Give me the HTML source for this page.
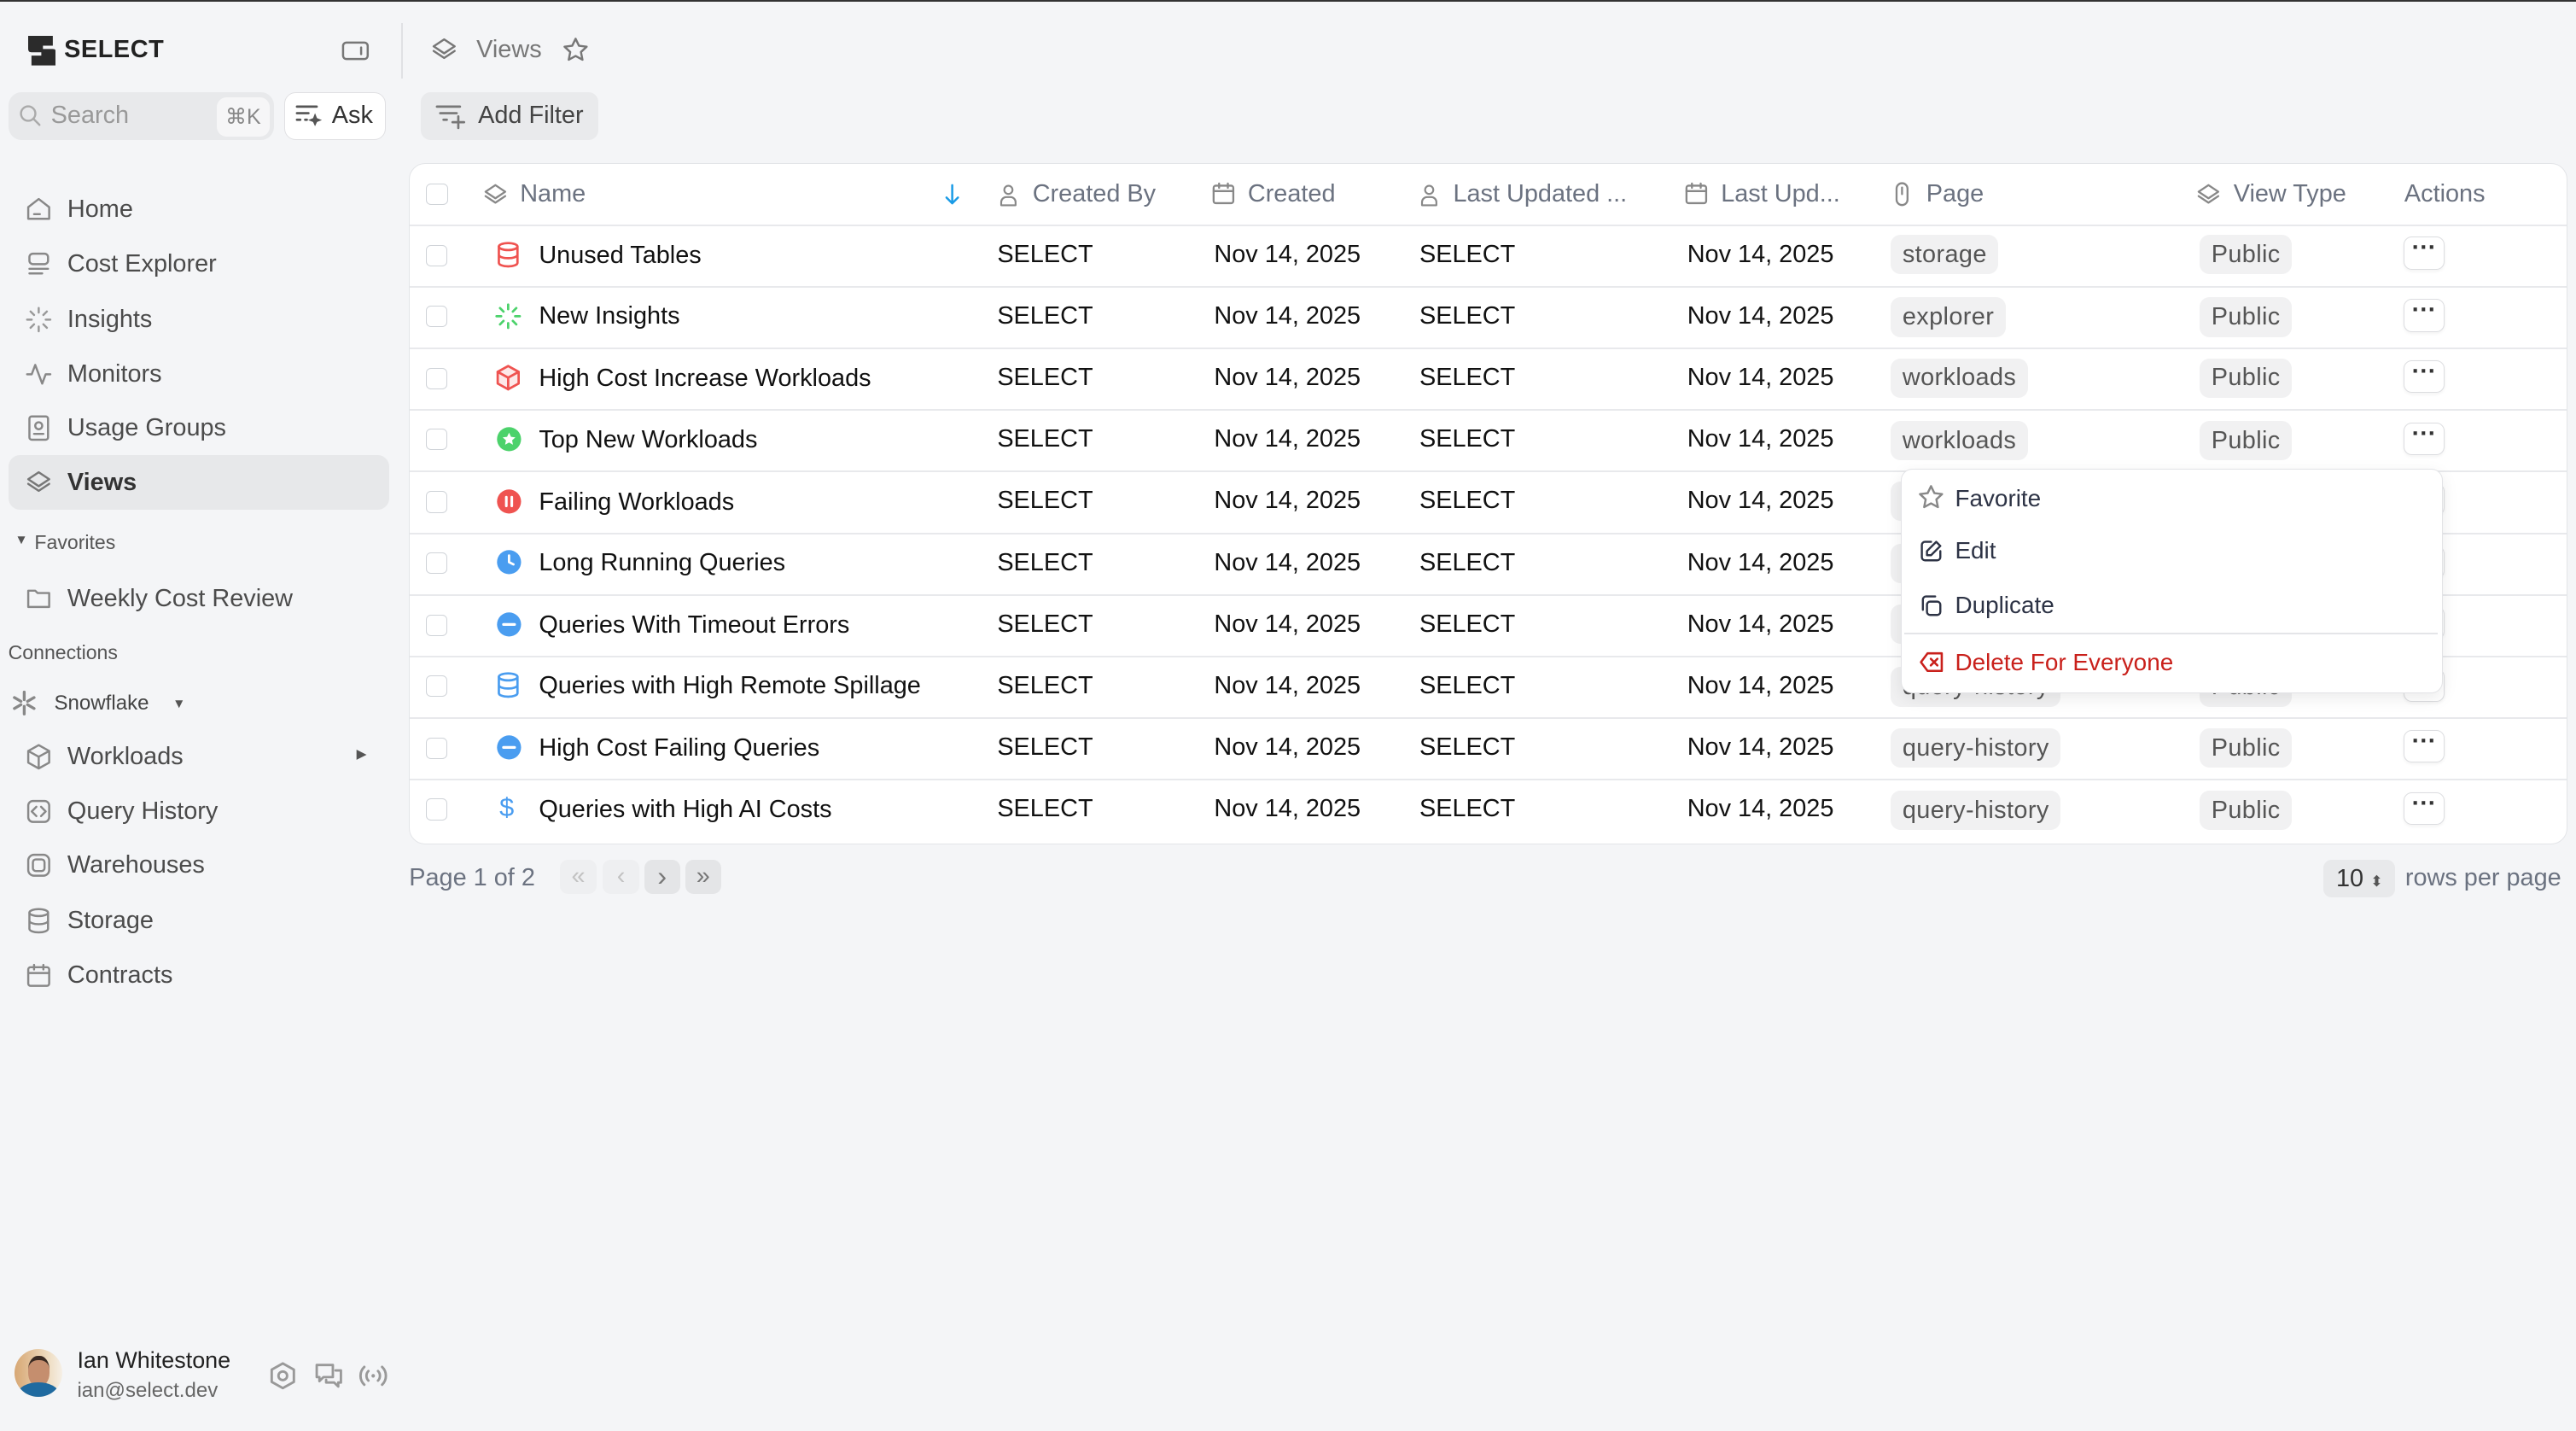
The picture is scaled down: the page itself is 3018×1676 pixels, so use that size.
<!DOCTYPE html>
<html><head><meta charset="utf-8"><style>
html,body{margin:0;padding:0}
body{width:1568px;height:870px;zoom:1.92475;background:#f4f5f7;font-family:"Liberation Sans",sans-serif;position:relative;top:1px;overflow:hidden;color:#111}
.a{position:absolute}
.topline{left:0;top:-1px;width:1568px;height:1px;background:#333}
.nav{left:41px;font-size:15px;color:#4b4b4b}
.ni{left:15px;width:17px;height:17px}
svg{fill:none;stroke-linecap:round;stroke-linejoin:round}
.tbl{left:249px;top:98px;width:1313px;height:414px;background:#fff;border:1px solid #e3e5e8;border-radius:10px}
.row{left:0;width:1313px;height:37px;border-top:1.5px solid #e8e9ec}
.cb{width:12px;height:12px;border:1px solid #cfd3d8;border-radius:3px;background:#fff}
.t{font-size:15px;color:#111;white-space:nowrap}
.h{font-size:15px;color:#6b7280;white-space:nowrap}
.chip{background:#f1f1f2;border-radius:6px;font-size:15px;color:#555;padding:2px 7px;height:20px;line-height:20px;letter-spacing:.2px}
.dots{width:24px;height:19px;border:1px solid #dcdde0;border-radius:5px;background:#fff;font-size:15px;text-align:center;line-height:13px;color:#333;font-weight:bold;box-shadow:0 1px 2px rgba(0,0,0,.05)}
.btn{background:#e9eaec;border-radius:6px}
</style></head><body>
<div class="a topline"></div>
<svg class="a" style="left:17px;top:21px" width="17" height="18" viewBox="0 0 17 18"><path d="M2 0h13v6H9v2h6q2 0 2 2v8H2v-6h6v-2H2q-2 0-2-2V0z" fill="#2b2b2b" stroke="none"/></svg>
<div class="a" style="left:39px;top:21px;font-size:15px;font-weight:bold;color:#222;letter-spacing:.3px">SELECT</div>
<svg class="a" style="left:208px;top:23px" width="17" height="14" viewBox="0 0 17 14"><rect x="1" y="2" width="15" height="10" rx="2" stroke="#777" stroke-width="1.3"/><path d="M12 5v4" stroke="#777" stroke-width="1.3"/></svg>
<div class="a" style="left:244px;top:13px;width:1px;height:34px;background:#e0e1e4"></div>
<svg class="a" style="left:262px;top:21px" width="17" height="17" viewBox="0 0 24 24"><path d="M12 3l9 6-9 6-9-6z M3 13l9 6 9-6" stroke="#777" stroke-width="1.8"/></svg>
<div class="a" style="left:290px;top:21px;font-size:15px;color:#777">Views</div>
<svg class="a" style="left:342px;top:21px" width="17" height="17" viewBox="0 0 24 24"><path d="M12 2.5l2.9 6 6.6.8-4.9 4.6 1.3 6.6L12 17.3l-5.9 3.2 1.3-6.6L2.5 9.3l6.6-.8z" stroke="#777" stroke-width="1.8"/></svg>
<div class="a" style="left:5px;top:55px;width:162px;height:29px;background:#e8e9eb;border-radius:8px"></div>
<svg class="a" style="left:11px;top:62px" width="15" height="15" viewBox="0 0 24 24"><circle cx="10" cy="10" r="7" stroke="#aaa" stroke-width="2"/><path d="M15 15l6 6" stroke="#aaa" stroke-width="2"/></svg>
<div class="a" style="left:31px;top:61px;font-size:15px;color:#999">Search</div>
<div class="a" style="left:132px;top:58px;width:32px;height:24px;background:#f6f6f7;border-radius:6px;font-size:13px;color:#888;text-align:center;line-height:24px">⌘K</div>
<div class="a" style="left:173px;top:55px;width:61px;height:28px;background:#fff;border:1px solid #e0e0e3;border-radius:7px"></div>
<svg class="a" style="left:180px;top:62px" width="18" height="15" viewBox="0 0 18 15"><path d="M1 2h12M1 6h7M1 10h2M6 10h1" stroke="#555" stroke-width="1.4"/><path d="M12 6l1.2 3 3 1.2-3 1.2L12 14l-1.2-2.6-3-1.2 3-1.2z" fill="#555" stroke="none"/></svg>
<div class="a" style="left:202px;top:61px;font-size:15px;color:#333">Ask</div>
<div class="a btn" style="left:256px;top:55px;width:108px;height:29px"></div>
<svg class="a" style="left:265px;top:62px" width="20" height="16" viewBox="0 0 20 16"><path d="M1 2h14M3 6h10M5 10h2M14 8v7M10.5 11.5h7" stroke="#777" stroke-width="1.4"/></svg>
<div class="a" style="left:291px;top:61px;font-size:15px;color:#444">Add Filter</div>
<div class="a" style="left:5px;top:276px;width:232px;height:33px;background:#e7e8ea;border-radius:7px"></div>
<svg class="a ni" style="top:118px" viewBox="0 0 24 24"><path d="M3 10l9-7 9 7v10H3z M8 16h5" stroke="#888" stroke-width="1.8"/></svg>
<div class="a nav" style="top:118px">Home</div>
<svg class="a ni" style="top:151px" viewBox="0 0 24 24"><rect x="4" y="3" width="16" height="9" rx="3" stroke="#888" stroke-width="1.8"/><path d="M4 16h16M4 20h11" stroke="#888" stroke-width="1.8"/></svg>
<div class="a nav" style="top:151px">Cost Explorer</div>
<svg class="a ni" style="top:185px" viewBox="0 0 24 24"><path d="M12 2v4M12 18v4M2 12h4M18 12h4M5 5l3 3M16 16l3 3M5 19l3-3M16 8l3-3" stroke="#999" stroke-width="1.8"/></svg>
<div class="a nav" style="top:185px">Insights</div>
<svg class="a ni" style="top:218px" viewBox="0 0 24 24"><path d="M2 12h4l3-8 6 16 3-8h4" stroke="#888" stroke-width="1.8"/></svg>
<div class="a nav" style="top:218px">Monitors</div>
<svg class="a ni" style="top:251px" viewBox="0 0 24 24"><rect x="4" y="2" width="16" height="20" rx="2" stroke="#888" stroke-width="1.8"/><circle cx="12" cy="10" r="3" stroke="#888" stroke-width="1.8"/><path d="M8 17h8" stroke="#888" stroke-width="1.8"/></svg>
<div class="a nav" style="top:251px">Usage Groups</div>
<svg class="a ni" style="top:284px" viewBox="0 0 24 24"><path d="M12 3l9 6-9 6-9-6z M3 13l9 6 9-6" stroke="#777" stroke-width="1.8"/></svg>
<div class="a nav" style="top:284px;font-weight:bold;color:#333">Views</div>
<div class="a" style="left:9px;top:323px;font-size:8px;color:#555">▼</div>
<div class="a" style="left:21px;top:322px;font-size:12px;color:#555">Favorites</div>
<svg class="a ni" style="top:355px" viewBox="0 0 24 24"><path d="M3 5h6l2 2h10v12H3z" stroke="#888" stroke-width="1.8"/></svg>
<div class="a nav" style="top:355px">Weekly Cost Review</div>
<div class="a" style="left:5px;top:389px;font-size:12px;color:#555">Connections</div>
<svg class="a" style="left:7px;top:419px" width="16" height="16" viewBox="0 0 24 24"><path d="M12 2v7M12 15v7M3 7l6 3.5M15 13.5l6 3.5M3 17l6-3.5M15 10.5l6-3.5" stroke="#888" stroke-width="2.6"/></svg>
<div class="a" style="left:33px;top:420px;font-size:12.5px;color:#444">Snowflake</div>
<div class="a" style="left:105px;top:423px;font-size:8px;color:#555">▼</div>
<svg class="a ni" style="top:451px" viewBox="0 0 24 24"><path d="M12 2l9 5v10l-9 5-9-5V7z M3 7l9 5 9-5M12 12v10" stroke="#888" stroke-width="1.8"/></svg>
<div class="a nav" style="top:451px">Workloads</div>
<div class="a" style="left:217px;top:453px;font-size:8px;color:#555">▶</div>
<svg class="a ni" style="top:484px" viewBox="0 0 24 24"><rect x="3" y="3" width="18" height="18" rx="4" stroke="#888" stroke-width="1.8"/><path d="M10 8l-4 4 4 4M14 8l4 4-4 4" stroke="#888" stroke-width="1.8"/></svg>
<div class="a nav" style="top:484px">Query History</div>
<svg class="a ni" style="top:517px" viewBox="0 0 24 24"><rect x="3" y="3" width="18" height="18" rx="5" stroke="#888" stroke-width="1.8"/><rect x="7" y="7" width="10" height="10" rx="2.5" stroke="#888" stroke-width="1.8"/></svg>
<div class="a nav" style="top:517px">Warehouses</div>
<svg class="a ni" style="top:551px" viewBox="0 0 24 24"><ellipse cx="12" cy="5" rx="8" ry="3" stroke="#888" stroke-width="1.8"/><path d="M4 5v14c0 1.7 3.6 3 8 3s8-1.3 8-3V5M4 12c0 1.7 3.6 3 8 3s8-1.3 8-3" stroke="#888" stroke-width="1.8"/></svg>
<div class="a nav" style="top:551px">Storage</div>
<svg class="a ni" style="top:584px" viewBox="0 0 24 24"><rect x="3" y="5" width="18" height="16" rx="2" stroke="#888" stroke-width="1.8"/><path d="M8 3v4M16 3v4M3 10h18" stroke="#888" stroke-width="1.8"/></svg>
<div class="a nav" style="top:584px">Contracts</div>
<div class="a" style="left:9px;top:820px;width:29px;height:29px;border-radius:50%;overflow:hidden;background:linear-gradient(90deg,#d7a774,#eedcc0 70%,#f5efe6)"><div style="position:absolute;left:8px;top:4px;width:13px;height:16px;border-radius:45%;background:#c58e6e;border-top:3px solid #3a2a22"></div><div style="position:absolute;left:2px;top:20px;width:25px;height:14px;border-radius:50% 50% 0 0;background:#1f6aa0"></div></div>
<div class="a" style="left:47px;top:819px;font-size:14px;color:#222">Ian Whitestone</div>
<div class="a" style="left:47px;top:838px;font-size:12.5px;color:#666">ian@select.dev</div>
<svg class="a" style="left:163px;top:827px" width="18" height="18" viewBox="0 0 24 24"><path d="M12 2l9 5v10l-9 5-9-5V7z" stroke="#999" stroke-width="2"/><circle cx="12" cy="12" r="3.5" stroke="#999" stroke-width="2"/></svg>
<svg class="a" style="left:190px;top:827px" width="20" height="18" viewBox="0 0 24 22"><path d="M3 3h12v9H8l-3 3v-3H3z M17 7h4v9h-2v3l-3-3h-6v-2" stroke="#999" stroke-width="1.8"/></svg>
<svg class="a" style="left:217px;top:828px" width="20" height="16" viewBox="0 0 24 18"><circle cx="12" cy="9" r="1.3" fill="#999" stroke="none"/><path d="M8.5 5.5a5 5 0 000 7M15.5 5.5a5 5 0 010 7M5.5 2.5a9 9 0 000 13M18.5 2.5a9 9 0 010 13" stroke="#999" stroke-width="1.8"/></svg>

<div class="a tbl">
 <div class="a cb" style="left:10px;top:12px"></div>
 <svg class="a" style="left:44px;top:11px" width="16" height="16" viewBox="0 0 24 24"><path d="M12 3l9 6-9 6-9-6z M3 13l9 6 9-6" stroke="#888" stroke-width="1.8"/></svg>
 <div class="a h" style="left:67px;top:10px">Name</div>
 <svg class="a" style="left:325px;top:12px" width="10" height="13" viewBox="0 0 10 13"><path d="M5 1v11M1.5 8.5L5 12l3.5-3.5" stroke="#1a9be6" stroke-width="1.3"/></svg>
 <svg class="a" style="left:357px;top:11px" width="15" height="16" viewBox="0 0 24 24"><circle cx="12" cy="7" r="4" stroke="#888" stroke-width="1.8"/><path d="M5 22v-3a5 5 0 015-5h4a5 5 0 015 5v3z" stroke="#888" stroke-width="1.8"/></svg>
 <div class="a h" style="left:379px;top:10px">Created By</div>
 <svg class="a" style="left:487px;top:10px" width="16" height="16" viewBox="0 0 24 24"><rect x="3" y="5" width="18" height="16" rx="2" stroke="#888" stroke-width="1.8"/><path d="M8 3v4M16 3v4M3 10h18" stroke="#888" stroke-width="1.8"/></svg>
 <div class="a h" style="left:510px;top:10px">Created</div>
 <svg class="a" style="left:613px;top:11px" width="15" height="16" viewBox="0 0 24 24"><circle cx="12" cy="7" r="4" stroke="#888" stroke-width="1.8"/><path d="M5 22v-3a5 5 0 015-5h4a5 5 0 015 5v3z" stroke="#888" stroke-width="1.8"/></svg>
 <div class="a h" style="left:635px;top:10px">Last Updated ...</div>
 <svg class="a" style="left:775px;top:10px" width="16" height="16" viewBox="0 0 24 24"><rect x="3" y="5" width="18" height="16" rx="2" stroke="#888" stroke-width="1.8"/><path d="M8 3v4M16 3v4M3 10h18" stroke="#888" stroke-width="1.8"/></svg>
 <div class="a h" style="left:798px;top:10px">Last Upd...</div>
 <svg class="a" style="left:900px;top:10px" width="16" height="17" viewBox="0 0 24 24"><rect x="7" y="2" width="10" height="20" rx="5" stroke="#888" stroke-width="1.8"/><path d="M12 6v6" stroke="#888" stroke-width="1.8"/></svg>
 <div class="a h" style="left:923px;top:10px">Page</div>
 <svg class="a" style="left:1087px;top:11px" width="16" height="16" viewBox="0 0 24 24"><path d="M12 3l9 6-9 6-9-6z M3 13l9 6 9-6" stroke="#888" stroke-width="1.8"/></svg>
 <div class="a h" style="left:1110px;top:10px">View Type</div>
 <div class="a h" style="left:1214px;top:10px">Actions</div>
 <div class="a row" style="top:37px"></div><div class="a row" style="top:74.5px"></div><div class="a row" style="top:112px"></div><div class="a row" style="top:149.5px"></div><div class="a row" style="top:187px"></div><div class="a row" style="top:224.5px"></div><div class="a row" style="top:262px"></div><div class="a row" style="top:299.5px"></div><div class="a row" style="top:337px"></div><div class="a row" style="top:374.5px"></div>
</div>

<div class="a cb" style="left:259px;top:148px"></div><div class="a cb" style="left:259px;top:185px"></div><div class="a cb" style="left:259px;top:223px"></div><div class="a cb" style="left:259px;top:260px"></div><div class="a cb" style="left:259px;top:298px"></div><div class="a cb" style="left:259px;top:335px"></div><div class="a cb" style="left:259px;top:373px"></div><div class="a cb" style="left:259px;top:410px"></div><div class="a cb" style="left:259px;top:448px"></div><div class="a cb" style="left:259px;top:485px"></div>
<svg class="a" style="left:301px;top:145px" width="17" height="18" viewBox="0 0 24 24"><ellipse cx="12" cy="5" rx="8" ry="3" stroke="#ef5350" stroke-width="2"/><path d="M4 5v14c0 1.7 3.6 3 8 3s8-1.3 8-3V5M4 12c0 1.7 3.6 3 8 3s8-1.3 8-3" stroke="#ef5350" stroke-width="2"/></svg>
<svg class="a" style="left:301px;top:183px" width="17" height="17" viewBox="0 0 24 24"><path d="M12 2v4M12 18v4M2 12h4M18 12h4M5 5l3 3M16 16l3 3M5 19l3-3M16 8l3-3" stroke="#4cd26b" stroke-width="2"/></svg>
<svg class="a" style="left:301px;top:220px" width="17" height="18" viewBox="0 0 24 24"><path d="M12 2l9 5v10l-9 5-9-5V7z" stroke="#ef5350" stroke-width="2" fill="#fde8e8"/><path d="M3 7l9 5 9-5M12 12v10" stroke="#ef5350" stroke-width="2"/></svg>
<svg class="a" style="left:302px;top:258px" width="16" height="16" viewBox="0 0 24 24"><circle cx="12" cy="12" r="11" fill="#4cd26b" stroke="none"/><path d="M12 6l1.8 3.8 4 .5-3 2.8.8 4L12 15l-3.6 2.1.8-4-3-2.8 4-.5z" fill="#fff" stroke="none"/></svg>
<svg class="a" style="left:302px;top:296px" width="16" height="16" viewBox="0 0 24 24"><circle cx="12" cy="12" r="11" fill="#ef5350" stroke="none"/><path d="M9.5 8v8M14.5 8v8" stroke="#fff" stroke-width="2.4"/></svg>
<svg class="a" style="left:302px;top:333px" width="16" height="16" viewBox="0 0 24 24"><circle cx="12" cy="12" r="11" fill="#4a9df0" stroke="none"/><path d="M12 6v6l4 2" stroke="#fff" stroke-width="2.2"/></svg>
<svg class="a" style="left:302px;top:371px" width="16" height="16" viewBox="0 0 24 24"><circle cx="12" cy="12" r="11" fill="#4a9df0" stroke="none"/><path d="M7 12h10" stroke="#fff" stroke-width="2.6"/></svg>
<svg class="a" style="left:301px;top:407px" width="17" height="18" viewBox="0 0 24 24"><ellipse cx="12" cy="5" rx="8" ry="3" stroke="#4a9df0" stroke-width="2"/><path d="M4 5v14c0 1.7 3.6 3 8 3s8-1.3 8-3V5M4 12c0 1.7 3.6 3 8 3s8-1.3 8-3" stroke="#4a9df0" stroke-width="2"/></svg>
<svg class="a" style="left:302px;top:446px" width="16" height="16" viewBox="0 0 24 24"><circle cx="12" cy="12" r="11" fill="#4a9df0" stroke="none"/><path d="M7 12h10" stroke="#fff" stroke-width="2.6"/></svg>
<div class="a" style="left:304px;top:481px;font-size:16px;color:#4a9df0">$</div>
<div class="a t" style="left:328px;top:146px">Unused Tables</div>
<div class="a t" style="left:328px;top:183px">New Insights</div>
<div class="a t" style="left:328px;top:221px">High Cost Increase Workloads</div>
<div class="a t" style="left:328px;top:258px">Top New Workloads</div>
<div class="a t" style="left:328px;top:296px">Failing Workloads</div>
<div class="a t" style="left:328px;top:333px">Long Running Queries</div>
<div class="a t" style="left:328px;top:371px">Queries With Timeout Errors</div>
<div class="a t" style="left:328px;top:408px">Queries with High Remote Spillage</div>
<div class="a t" style="left:328px;top:446px">High Cost Failing Queries</div>
<div class="a t" style="left:328px;top:483px">Queries with High AI Costs</div>
<div class="a" style="left:607px;top:146px;line-height:37.5px;margin-top:-11px">
<div class="t">SELECT</div><div class="t">SELECT</div><div class="t">SELECT</div><div class="t">SELECT</div><div class="t">SELECT</div><div class="t">SELECT</div><div class="t">SELECT</div><div class="t">SELECT</div><div class="t">SELECT</div><div class="t">SELECT</div></div>
<div class="a" style="left:739px;top:146px;line-height:37.5px;margin-top:-11px">
<div class="t">Nov 14, 2025</div><div class="t">Nov 14, 2025</div><div class="t">Nov 14, 2025</div><div class="t">Nov 14, 2025</div><div class="t">Nov 14, 2025</div><div class="t">Nov 14, 2025</div><div class="t">Nov 14, 2025</div><div class="t">Nov 14, 2025</div><div class="t">Nov 14, 2025</div><div class="t">Nov 14, 2025</div></div>
<div class="a" style="left:864px;top:146px;line-height:37.5px;margin-top:-11px">
<div class="t">SELECT</div><div class="t">SELECT</div><div class="t">SELECT</div><div class="t">SELECT</div><div class="t">SELECT</div><div class="t">SELECT</div><div class="t">SELECT</div><div class="t">SELECT</div><div class="t">SELECT</div><div class="t">SELECT</div></div>
<div class="a" style="left:1027px;top:146px;line-height:37.5px;margin-top:-11px">
<div class="t">Nov 14, 2025</div><div class="t">Nov 14, 2025</div><div class="t">Nov 14, 2025</div><div class="t">Nov 14, 2025</div><div class="t">Nov 14, 2025</div><div class="t">Nov 14, 2025</div><div class="t">Nov 14, 2025</div><div class="t">Nov 14, 2025</div><div class="t">Nov 14, 2025</div><div class="t">Nov 14, 2025</div></div>
<div class="a chip" style="left:1151px;top:142px">storage</div>
<div class="a chip" style="left:1151px;top:180px">explorer</div>
<div class="a chip" style="left:1151px;top:217px">workloads</div>
<div class="a chip" style="left:1151px;top:255px">workloads</div>
<div class="a chip" style="left:1151px;top:292px">workloads</div>
<div class="a chip" style="left:1151px;top:330px">query-history</div>
<div class="a chip" style="left:1151px;top:367px">query-history</div>
<div class="a chip" style="left:1151px;top:405px">query-history</div>
<div class="a chip" style="left:1151px;top:442px">query-history</div>
<div class="a chip" style="left:1151px;top:480px">query-history</div>
<div class="a chip" style="left:1339px;top:142px">Public</div><div class="a chip" style="left:1339px;top:180px">Public</div><div class="a chip" style="left:1339px;top:217px">Public</div><div class="a chip" style="left:1339px;top:255px">Public</div><div class="a chip" style="left:1339px;top:292px">Public</div><div class="a chip" style="left:1339px;top:330px">Public</div><div class="a chip" style="left:1339px;top:367px">Public</div><div class="a chip" style="left:1339px;top:405px">Public</div><div class="a chip" style="left:1339px;top:442px">Public</div><div class="a chip" style="left:1339px;top:480px">Public</div>
<div class="a dots" style="left:1463px;top:143px">···</div><div class="a dots" style="left:1463px;top:181px">···</div><div class="a dots" style="left:1463px;top:218px">···</div><div class="a dots" style="left:1463px;top:256px">···</div><div class="a dots" style="left:1463px;top:293px">···</div><div class="a dots" style="left:1463px;top:331px">···</div><div class="a dots" style="left:1463px;top:368px">···</div><div class="a dots" style="left:1463px;top:406px">···</div><div class="a dots" style="left:1463px;top:443px">···</div><div class="a dots" style="left:1463px;top:481px">···</div>

<div class="a" style="left:1157px;top:284px;width:329px;height:136px;background:#fff;border:1px solid #e2e3e6;border-radius:7px;box-shadow:0 3px 10px rgba(0,0,0,.08)"></div>
<svg class="a" style="left:1167px;top:293px" width="17" height="17" viewBox="0 0 24 24"><path d="M12 2.5l2.9 6 6.6.8-4.9 4.6 1.3 6.6L12 17.3l-5.9 3.2 1.3-6.6L2.5 9.3l6.6-.8z" stroke="#888" stroke-width="1.8"/></svg>
<div class="a" style="left:1190px;top:294px;font-size:14.5px;color:#2d3345">Favorite</div>
<svg class="a" style="left:1168px;top:327px" width="15" height="15" viewBox="0 0 24 24"><path d="M12 3H6a3 3 0 00-3 3v12a3 3 0 003 3h12a3 3 0 003-3v-6M17 3l4 4-9 9H8v-4z" stroke="#2d3345" stroke-width="2"/></svg>
<div class="a" style="left:1190px;top:326px;font-size:14.5px;color:#2d3345">Edit</div>
<svg class="a" style="left:1168px;top:360px" width="15" height="15" viewBox="0 0 24 24"><rect x="8" y="8" width="13" height="13" rx="3" stroke="#2d3345" stroke-width="2"/><path d="M4 16V6a3 3 0 013-3h9" stroke="#2d3345" stroke-width="2"/></svg>
<div class="a" style="left:1190px;top:359px;font-size:14.5px;color:#2d3345">Duplicate</div>
<div class="a" style="left:1159px;top:384px;width:325px;height:1px;background:#e4e5e8"></div>
<svg class="a" style="left:1168px;top:395px" width="16" height="14" viewBox="0 0 24 20"><path d="M8 2h13v16H8l-6-8z" stroke="#c9201b" stroke-width="2"/><path d="M11 7l6 6M17 7l-6 6" stroke="#c9201b" stroke-width="2"/></svg>
<div class="a" style="left:1190px;top:394px;font-size:14.5px;color:#c9201b">Delete For Everyone</div>

<div class="a" style="left:249px;top:525px;font-size:15px;color:#6b7280">Page 1 of 2</div>
<div class="a" style="left:341px;top:522px;width:22px;height:21px;border-radius:5px;background:#eeeff1;color:#c2c2c2;font-size:15px;text-align:center;line-height:20px">«</div>
<div class="a" style="left:367px;top:522px;width:22px;height:21px;border-radius:5px;background:#eeeff1;color:#c2c2c2;font-size:15px;text-align:center;line-height:20px">‹</div>
<div class="a" style="left:392px;top:522px;width:22px;height:21px;border-radius:5px;background:#e4e5e7;color:#777;font-size:17px;text-align:center;line-height:20px">›</div>
<div class="a" style="left:417px;top:522px;width:22px;height:21px;border-radius:5px;background:#e4e5e7;color:#777;font-size:15px;text-align:center;line-height:20px">»</div>
<div class="a" style="left:1414px;top:522px;width:44px;height:23px;border-radius:5px;background:#e8e9eb;font-size:15px;color:#333;line-height:23px;padding-left:8px;box-sizing:border-box">10 <span style="font-size:9px;color:#555">⬍</span></div>
<div class="a" style="left:1464px;top:525px;font-size:15px;color:#6b7280">rows per page</div>
</body></html>
